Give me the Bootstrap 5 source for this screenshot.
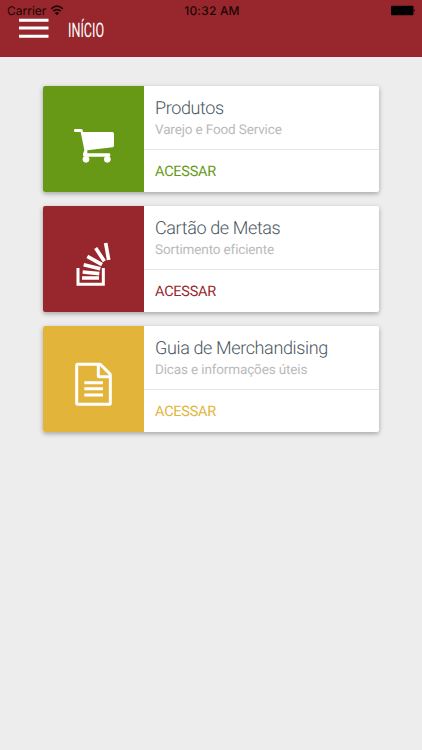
<!DOCTYPE html>
<html lang="pt-BR">
<head>
  <meta charset="UTF-8">
  <meta name="viewport" content="width=device-width, initial-scale=1.0">
  <title>Início</title>
  <link href="https://cdn.jsdelivr.net/npm/bootstrap@5.3.3/dist/css/bootstrap.min.css" rel="stylesheet">
  <style>
    body {
      background-color: #ededed;
      font-family: Roboto, sans-serif;
      min-height: 750px;
      text-rendering: geometricPrecision;
    }

    .app-header {
      height: 57px;
      background-color: #97272c;
    }

    /* barra de status */
    .status-bar {
      display: grid;
      grid-template-columns: 1fr auto 1fr;
      height: 18px;
      padding: 4px 6px 0 7px;
      color: #1c0506;
      font: 12px/14px Inter, sans-serif;
    }

    .status-bar .clock {
      font-weight: 500;
      letter-spacing: .2px;
      padding-left: 1px;
    }

    .title-row {
      padding-left: 19px;
      gap: 19px;
    }

    .title-row h1 {
      margin: 0;
      color: #fff;
      font-size: 20px;
      font-weight: 400;
      line-height: 24px;
      transform: scaleX(.63);
      transform-origin: left center;
    }

    .menu-list {
      padding: 29px 43px 0 43px;
      gap: 14px;
    }

    .menu-card {
      height: 106px;
      border: 0;
      border-radius: 2px;
      box-shadow: 0 2px 4px rgba(0, 0, 0, .22), 0 1px 6px rgba(0, 0, 0, .1);
    }

    .menu-tile {
      width: 101px;
      padding: 34px 0 0 27px;
      background-color: var(--tone);
      border-radius: 2px 0 0 2px;
    }

    .menu-text {
      height: 64px;
      padding: 11px 0 0 11px;
      border-bottom: 1px solid #e6e6e6;
    }

    .menu-text h2 {
      margin: 0;
      color: #485661;
      font-size: 18px;
      font-weight: 300;
      line-height: 23px;
      letter-spacing: -.37px;
    }

    .menu-text p {
      margin: 0;
      color: #bababa;
      font-size: 13.5px;
      line-height: 20px;
      letter-spacing: -.14px;
    }

    .menu-link {
      padding: 11px 0 0 11px;
      color: var(--tone);
      font-size: 14.5px;
      line-height: 22px;
      letter-spacing: -.25px;
    }

    .tone-green { --tone: #679916; }
    .tone-red { --tone: #97272c; }
    .tone-yellow { --tone: #e3b43a; }
  </style>
</head>
<body>
  <header class="app-header">
    <div class="status-bar">
      <div class="d-flex">
        <span>Carrier</span>
        <svg class="ms-1" width="14" height="12" viewBox="0 0 14 12" fill="none" stroke="#1c0506" stroke-width="1.7">
          <path d="M1.2 4.8Q7 -.5 12.8 4.8M3.3 7.2Q7 4 10.7 7.2"/>
          <path d="M4.8 8.9Q7 7.2 9.2 8.9L7 11.2z" fill="#1c0506" stroke="none"/>
        </svg>
      </div>
      <span class="clock">10:32 AM</span>
      <svg class="ms-auto" width="25" height="12" viewBox="0 0 25 12">
        <rect x="0" y="1.8" width="22.5" height="9.5" rx="1.2"/>
        <path d="M23.3 4.8q1.6 1.6 0 3.4z"/>
      </svg>
    </div>
    <div class="title-row d-flex">
      <svg width="30" height="21" viewBox="0 0 30 21" fill="#fff">
        <path d="M0 .8h29.5v3H0zM0 8.5h29.5v3H0zM0 16.8h29.5v3H0z"/>
      </svg>
      <h1>INÍCIO</h1>
    </div>
  </header>

  <main class="menu-list d-flex flex-column">
    <div class="card menu-card flex-row tone-green">
      <div class="menu-tile">
        <svg class="d-block" width="48" height="48" viewBox="102 126 144 144" fill="#fff">
          <path d="M118 153h17q4 0 5 4l1 5h88q5 0 5 5v36q0 4-4 5l-76 9v9h65q4 0 4 4v2q0 4-4 4h-73q-5 0-5-4v-4l4-12-11-54h-16q-4 0-4-4v-1q0-4 4-4z"/>
          <circle cx="150" cy="244" r="10"/>
          <circle cx="214" cy="244" r="10"/>
        </svg>
      </div>
      <div class="flex-grow-1">
        <div class="menu-text">
          <h2>Produtos</h2>
          <p>Varejo e Food Service</p>
        </div>
        <div class="menu-link">ACESSAR</div>
      </div>
    </div>

    <div class="card menu-card flex-row tone-red">
      <div class="menu-tile">
        <svg class="d-block" width="48" height="48" viewBox="102 126 144 144" fill="none" stroke="#fff" stroke-width="11">
          <path d="M126 210v49h76v-49" stroke-width="9"/>
          <path d="M138 240h51M140 222l50 5M143 200l50 12M154 175l44 25M179 150l26 40M209 135l9 51"/>
        </svg>
      </div>
      <div class="flex-grow-1">
        <div class="menu-text">
          <h2>Cartão de Metas</h2>
          <p>Sortimento eficiente</p>
        </div>
        <div class="menu-link">ACESSAR</div>
      </div>
    </div>

    <div class="card menu-card flex-row tone-yellow">
      <div class="menu-tile">
        <svg class="d-block" width="48" height="48" viewBox="102 126 144 144" fill="none" stroke="#fff" stroke-width="9" stroke-linejoin="round">
          <path d="M125 139h66q2 0 4 2l26 26q2 2 2 5v84q0 3-3 3h-95q-3 0-3-3V142q0-3 3-3z"/>
          <path d="M187 140v33q0 3 3 3h33"/>
          <path d="M145 194h56M145 212h56M145 231h56"/>
        </svg>
      </div>
      <div class="flex-grow-1">
        <div class="menu-text">
          <h2>Guia de Merchandising</h2>
          <p>Dicas e informações úteis</p>
        </div>
        <div class="menu-link">ACESSAR</div>
      </div>
    </div>
  </main>

  <script src="https://cdn.jsdelivr.net/npm/bootstrap@5.3.3/dist/js/bootstrap.bundle.min.js"></script>
</body>
</html>
